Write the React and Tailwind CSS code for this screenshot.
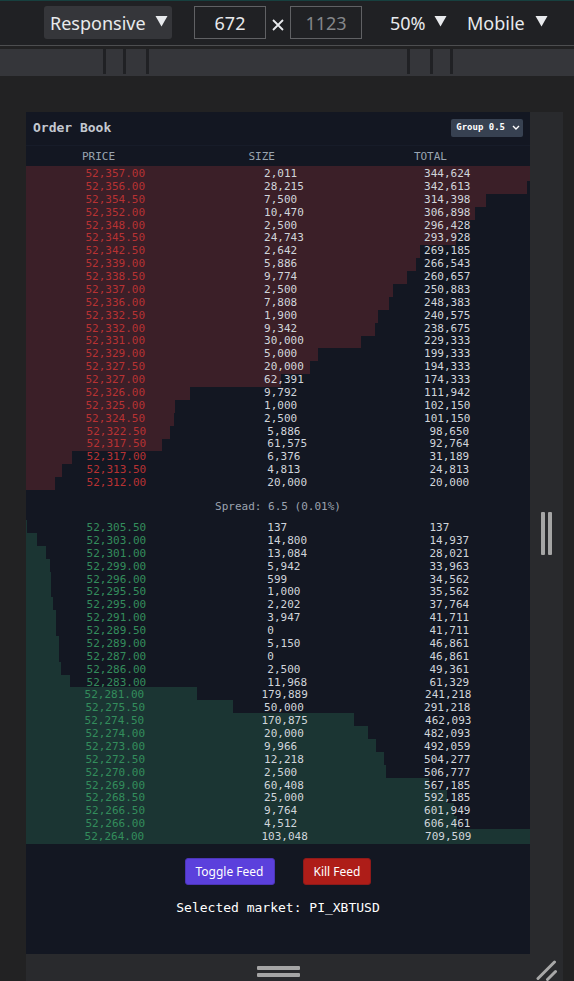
const asks = [
  ["52,357.00", "2,011", "344,624"],
  ["52,356.00", "28,215", "342,613"],
  ["52,354.50", "7,500", "314,398"],
  ["52,352.00", "10,470", "306,898"],
  ["52,348.00", "2,500", "296,428"],
  ["52,345.50", "24,743", "293,928"],
  ["52,342.50", "2,642", "269,185"],
  ["52,339.00", "5,886", "266,543"],
  ["52,338.50", "9,774", "260,657"],
  ["52,337.00", "2,500", "250,883"],
  ["52,336.00", "7,808", "248,383"],
  ["52,332.50", "1,900", "240,575"],
  ["52,332.00", "9,342", "238,675"],
  ["52,331.00", "30,000", "229,333"],
  ["52,329.00", "5,000", "199,333"],
  ["52,327.50", "20,000", "194,333"],
  ["52,327.00", "62,391", "174,333"],
  ["52,326.00", "9,792", "111,942"],
  ["52,325.00", "1,000", "102,150"],
  ["52,324.50", "2,500", "101,150"],
  ["52,322.50", "5,886", "98,650"],
  ["52,317.50", "61,575", "92,764"],
  ["52,317.00", "6,376", "31,189"],
  ["52,313.50", "4,813", "24,813"],
  ["52,312.00", "20,000", "20,000"],
];

const bids = [
  ["52,305.50", "137", "137"],
  ["52,303.00", "14,800", "14,937"],
  ["52,301.00", "13,084", "28,021"],
  ["52,299.00", "5,942", "33,963"],
  ["52,296.00", "599", "34,562"],
  ["52,295.50", "1,000", "35,562"],
  ["52,295.00", "2,202", "37,764"],
  ["52,291.00", "3,947", "41,711"],
  ["52,289.50", "0", "41,711"],
  ["52,289.00", "5,150", "46,861"],
  ["52,287.00", "0", "46,861"],
  ["52,286.00", "2,500", "49,361"],
  ["52,283.00", "11,968", "61,329"],
  ["52,281.00", "179,889", "241,218"],
  ["52,275.50", "50,000", "291,218"],
  ["52,274.50", "170,875", "462,093"],
  ["52,274.00", "20,000", "482,093"],
  ["52,273.00", "9,966", "492,059"],
  ["52,272.50", "12,218", "504,277"],
  ["52,270.00", "2,500", "506,777"],
  ["52,269.00", "60,408", "567,185"],
  ["52,268.50", "25,000", "592,185"],
  ["52,266.50", "9,764", "601,949"],
  ["52,266.00", "4,512", "606,461"],
  ["52,264.00", "103,048", "709,509"],
];

const toNumber = (text) => Number(text.replace(/,/g, ""));

function Levels({ rows, barClass, priceClass }) {
  const max = Math.max(...rows.map((row) => toNumber(row[2])));
  return (
    <tbody className="flex h-[322px] flex-col">
      {rows.map(([price, size, total]) => (
        <tr key={price} className="relative isolate flex min-h-0 flex-1 justify-around leading-[15px]">
          <td className={priceClass}>
            <span
              className={`absolute top-0 left-0 -z-10 h-[15px] ${barClass}`}
              style={{ width: `${(toNumber(total) / max) * 100}%` }}
            />
            {price}
          </td>
          <td className="min-w-[41px]">{size}</td>
          <td className="min-w-10">{total}</td>
        </tr>
      ))}
    </tbody>
  );
}

function Triangle() {
  return (
    <svg viewBox="0 0 13 11" className="pointer-events-none mb-0.5 h-[11px] w-[13px] shrink-0" aria-hidden="true">
      <path d="M0.5 0H12.5L6.5 10.5Z" fill="#e8eaed" />
    </svg>
  );
}

function ToolbarSelect({ label, value, className }) {
  return (
    <label className={`flex h-[33px] items-center justify-between rounded-[3px] ${className}`}>
      <select aria-label={label} className="field-sizing-content appearance-none bg-transparent text-[#e8eaed] outline-none">
        <option>{value}</option>
      </select>
      <Triangle />
    </label>
  );
}

function Toolbar() {
  return (
    <header className="flex h-[46px] items-center border-t border-b border-t-[#17403f] border-b-[#4d4e50] bg-[#202124] pb-px pl-11 font-['Noto_Sans','Open_Sans',sans-serif] text-[18px] leading-6">
      <ToolbarSelect label="Device" value="Responsive" className="w-32 bg-[#35363a] pr-1 pl-[6px]" />
      <input
        aria-label="Width"
        defaultValue="672"
        className="ml-[22px] h-[33px] w-[72px] border border-[#606164] bg-transparent text-center text-[#e8eaed] outline-none"
      />
      <svg viewBox="0 0 12 12" className="mt-1 mr-[6px] ml-[6px] size-3 shrink-0" aria-hidden="true">
        <path d="M1 1L11 11M11 1L1 11" stroke="#e8eaed" strokeWidth="1.8" />
      </svg>
      <input
        aria-label="Height"
        defaultValue="1123"
        className="h-[33px] w-[72px] border border-[#606164] bg-transparent text-center text-[#85878a] outline-none"
      />
      <ToolbarSelect label="Zoom" value="50%" className="ml-7 w-[57px]" />
      <ToolbarSelect label="Device type" value="Mobile" className="ml-5 w-[81px]" />
    </header>
  );
}

function Ruler() {
  return (
    <div className="mt-[3px] h-[27px] bg-[#35363a]">
      <div className="flex h-[25px] gap-[3px] bg-[#202124]">
        <div className="w-[103px] bg-[#35363a]" />
        <div className="w-[17px] bg-[#35363a]" />
        <div className="w-5 bg-[#35363a]" />
        <div className="w-[258px] bg-[#35363a]" />
        <div className="w-5 bg-[#35363a]" />
        <div className="w-[17px] bg-[#35363a]" />
        <div className="flex-1 bg-[#35363a]" />
      </div>
    </div>
  );
}

function OrderBook() {
  return (
    <main className="flex-1 bg-[#131722] pb-9 font-['DejaVu_Sans_Mono',monospace] text-[11px] text-[#d1d5db]">
      <div className="flex h-[34px] items-center justify-between border-b border-[#171c29] px-[7px] pb-px">
        <h1 className="text-[13px] font-bold text-[#c3c8d0]">Order Book</h1>
        <label className="flex h-[18px] items-center rounded-[2px] bg-[#374151] px-[5px]">
          <select
            aria-label="Group"
            className="field-sizing-content appearance-none bg-transparent text-[9px] font-bold text-white outline-none"
          >
            <option>Group 0.5</option>
          </select>
          <svg viewBox="0 0 8 6" className="pointer-events-none -mr-0.5 ml-[7px] h-[6px] w-2" aria-hidden="true">
            <path d="M1 1L4 4L7 1" fill="none" stroke="#fff" strokeWidth="1.4" />
          </svg>
        </label>
      </div>
      <table className="block w-full">
        <thead className="block">
          <tr className="flex h-5 items-center justify-between pt-0.5 pr-[83px] pl-14 text-[#9aa5b1]">
            <th className="font-normal">PRICE</th>
            <th className="w-8 text-left font-normal">SIZE</th>
            <th className="font-normal">TOTAL</th>
          </tr>
        </thead>
        <Levels rows={asks} barClass="bg-[#3b1f28]" priceClass="text-[#b83233]" />
        <tbody className="block">
          <tr className="flex h-8 items-center justify-center pt-[6px] text-[#9ca3af]">
            <td>Spread: 6.5 (0.01%)</td>
          </tr>
        </tbody>
        <Levels rows={bids} barClass="bg-[#1b3533]" priceClass="text-[#338d5c]" />
      </table>
      <div className="mt-4 flex justify-center gap-7 font-['Noto_Sans','Open_Sans',sans-serif] text-[12px] text-white">
        <button className="h-[27px] rounded-[3px] border border-[#4c35b8] bg-[#5b40dc] px-[10px]">Toggle Feed</button>
        <button className="h-[27px] rounded-[3px] border border-[#8e1a1a] bg-[#ae1d18] px-[10px]">Kill Feed</button>
      </div>
      <p className="mt-[13px] text-center text-[13px] leading-5 text-white">Selected market: PI_XBTUSD</p>
    </main>
  );
}

export default function App() {
  return (
    <div className="flex min-h-screen flex-col bg-[#222223]">
      <Toolbar />
      <Ruler />
      <div className="mt-9 mr-[11px] ml-[26px] flex flex-1 flex-col bg-[#292a2d]">
        <div className="flex flex-1">
          <OrderBook />
          <div className="flex w-[33px] items-center justify-center gap-[3px]">
            <div className="h-[43px] w-1 rounded-[1px] bg-[#a5a5a5]" />
            <div className="h-[43px] w-1 rounded-[1px] bg-[#a5a5a5]" />
          </div>
        </div>
        <div className="flex h-[27px] items-center">
          <div className="flex flex-1 flex-col items-center gap-[3px] pt-2">
            <div className="h-1 w-[43px] rounded-[1px] bg-[#a5a5a5]" />
            <div className="h-1 w-[43px] rounded-[1px] bg-[#a5a5a5]" />
          </div>
          <div className="flex w-[33px] justify-center pt-[6px]">
            <svg viewBox="0 0 21 21" className="size-[21px]" aria-hidden="true">
              <path d="M2 18.5L18.5 2M11.5 19.5L19.5 11.5" stroke="#a8a8a8" strokeWidth="3" strokeLinecap="round" />
            </svg>
          </div>
        </div>
      </div>
    </div>
  );
}
